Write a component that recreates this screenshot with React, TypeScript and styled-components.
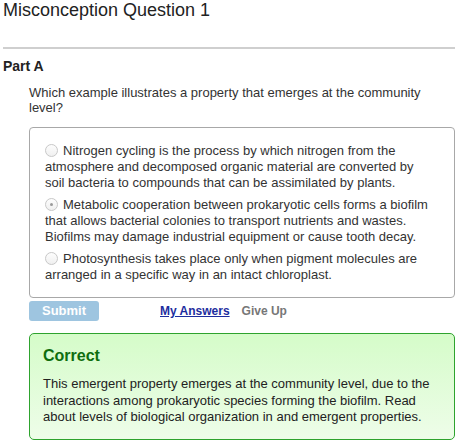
import React from "react";
import styled, { createGlobalStyle } from "styled-components";

const Global = createGlobalStyle`
  html, body { margin: 0; padding: 0; background: #fff; }
  body { font-family: "Liberation Sans", Arial, sans-serif; }
`;

const Page = styled.div`
  width: 452px;
  padding: 0 0 0 3px;
  color: #333;
`;

const Title = styled.h1`
  margin: 0;
  font-size: 18px;
  font-weight: normal;
  line-height: 20px;
  color: #222;
`;

const Divider = styled.hr`
  margin: 27px 0 0;
  border: 0;
  height: 2px;
  background: #cfcfcf;
`;

const PartTitle = styled.h2`
  margin: 9px 0 0;
  font-size: 14px;
  font-weight: bold;
  line-height: 16px;
  color: #222;
`;

const Body = styled.div`
  padding-left: 26px;
`;

const Prompt = styled.p`
  margin: 11px 0 0;
  font-size: 13px;
  line-height: 15px;
  color: #333;
`;

const OptionsBox = styled.div`
  margin-top: 12px;
  border: 1px solid #a8a8a8;
  border-radius: 4px;
  padding: 15px 22px 14px 15px;
  display: flex;
  flex-direction: column;
  gap: 6px;
`;

const Option = styled.label`
  display: block;
  font-size: 13px;
  line-height: 16px;
  color: #333;
`;

const Radio = styled.span<{ $checked?: boolean }>`
  display: inline-block;
  position: relative;
  box-sizing: border-box;
  width: 13px;
  height: 13px;
  border: 1px solid #c8c8c8;
  border-radius: 50%;
  background: linear-gradient(#fdfdfd, #f0f0f0);
  vertical-align: -2px;
  margin-right: 5px;
  &::after {
    content: "";
    display: ${(p) => (p.$checked ? "block" : "none")};
    position: absolute;
    left: 4px;
    top: 4px;
    width: 3px;
    height: 3px;
    border-radius: 50%;
    background: #9a9a9a;
  }
`;

const Actions = styled.div`
  margin-top: 3px;
  display: flex;
  align-items: center;
`;

const SubmitButton = styled.button`
  width: 70px;
  height: 20px;
  border: 0;
  border-radius: 3px;
  background: #9ec5e0;
  color: #fff;
  font-family: "Liberation Sans", Arial, sans-serif;
  font-size: 13px;
  font-weight: bold;
  padding: 0;
  line-height: 20px;
`;

const LinkAction = styled.a<{ $muted?: boolean }>`
  font-size: 12px;
  font-weight: bold;
  color: ${(p) => (p.$muted ? "#777" : "#1d2d9e")};
  text-decoration: ${(p) => (p.$muted ? "none" : "underline")};
  margin-left: ${(p) => (p.$muted ? "12px" : "61px")};
`;

const Feedback = styled.div`
  margin-top: 12px;
  border: 1px solid #2ea32e;
  border-radius: 5px;
  background: linear-gradient(#d5fcc9, #eefde9);
  padding: 12px 13px 13px 13px;
`;

const FeedbackTitle = styled.div`
  font-size: 16px;
  font-weight: bold;
  line-height: 20px;
  color: #0e6d0e;
`;

const FeedbackText = styled.p`
  margin: 10px 0 0;
  font-size: 13px;
  line-height: 16.5px;
  color: #222;
`;

const options = [
  {
    text: "Nitrogen cycling is the process by which nitrogen from the atmosphere and decomposed organic material are converted by soil bacteria to compounds that can be assimilated by plants.",
    checked: false,
  },
  {
    text: "Metabolic cooperation between prokaryotic cells forms a biofilm that allows bacterial colonies to transport nutrients and wastes. Biofilms may damage industrial equipment or cause tooth decay.",
    checked: true,
  },
  {
    text: "Photosynthesis takes place only when pigment molecules are arranged in a specific way in an intact chloroplast.",
    checked: false,
  },
];

export default function App() {
  return (
    <Page>
      <Global />
      <Title>Misconception Question 1</Title>
      <Divider />
      <PartTitle>Part A</PartTitle>
      <Body>
        <Prompt>
          Which example illustrates a property that emerges at the community level?
        </Prompt>
        <OptionsBox>
          {options.map((o, i) => (
            <Option key={i}>
              <Radio $checked={o.checked} />
              {o.text}
            </Option>
          ))}
        </OptionsBox>
        <Actions>
          <SubmitButton>Submit</SubmitButton>
          <LinkAction href="#">My Answers</LinkAction>
          <LinkAction $muted>Give Up</LinkAction>
        </Actions>
        <Feedback>
          <FeedbackTitle>Correct</FeedbackTitle>
          <FeedbackText>
            This emergent property emerges at the community level, due to the
            interactions among prokaryotic species forming the biofilm. Read
            about levels of biological organization in and emergent properties.
          </FeedbackText>
        </Feedback>
      </Body>
    </Page>
  );
}
